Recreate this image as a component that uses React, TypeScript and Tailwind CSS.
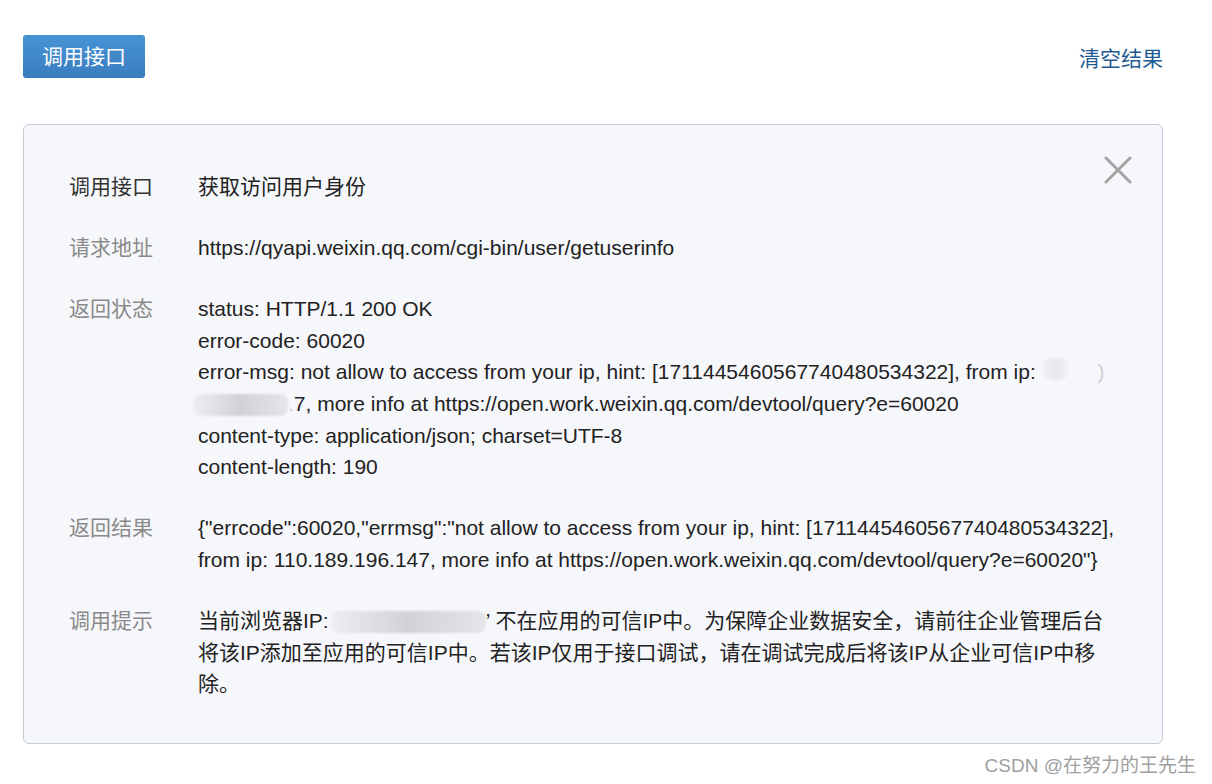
import React from 'react';

const Row = ({ label, dark, children }: { label: string; dark?: boolean; children: React.ReactNode }) => (
  <div className="flex">
    <div className={`w-[129px] shrink-0 ${dark ? 'text-[#333333]' : 'text-[#8a8a8a]'}`}>{label}</div>
    <div className="flex-1 text-[#222222]">{children}</div>
  </div>
);

const Blur = ({ w, className = '' }: { w: number; className?: string }) => (
  <span
    className={`inline-block align-middle h-[22px] rounded-[8px] bg-gradient-to-r from-[#eeeef2] via-[#d2d2d6] to-[#e6e6ea] blur-[1px] ${className}`}
    style={{ width: w }}
  />
);

export default function App() {
  return (
    <div className="min-h-[784px] w-[1212px] bg-white font-['Liberation_Sans','Noto_Sans_CJK_SC',sans-serif] relative">
      <div className="flex items-start justify-between pl-[23px] pr-[49px] pt-[35px]">
        <button className="h-[43px] w-[122px] rounded-[3px] bg-gradient-to-b from-[#4693d6] to-[#3a7ebf] text-[21px] text-white">
          调用接口
        </button>
        <button className="mt-[8px] text-[21px] text-[#1f5b92]">清空结果</button>
      </div>

      <div className="relative mx-[23px] mt-[46px] w-[1140px] rounded-[6px] border border-[#c3cbd6] bg-[#f6f7fb] pl-[45px] pr-[30px] pt-[46px] pb-[43px] text-[21px] leading-[31.6px]">
        <svg className="absolute right-[30px] top-[31px]" width="28" height="28" viewBox="0 0 28 28">
          <path d="M2 2 L26 26 M26 2 L2 26" stroke="#a3a3a3" strokeWidth="3" strokeLinecap="round" />
        </svg>

        <div className="flex flex-col gap-[29.5px]">
          <Row label="调用接口" dark>获取访问用户身份</Row>
          <Row label="请求地址">https://qyapi.weixin.qq.com/cgi-bin/user/getuserinfo</Row>
          <Row label="返回状态">
            <div>status: HTTP/1.1 200 OK</div>
            <div>error-code: 60020</div>
            <div className="whitespace-nowrap">
              error-msg: not allow to access from your ip, hint: [1711445460567740480534322], from ip:{' '}
              <Blur w={26} className="opacity-40 -mt-[10px]" />
              <span className="ml-[30px] text-[#d0d0d0]">)</span>
            </div>
            <div className="whitespace-nowrap -ml-[5px]">
              <Blur w={95} />
              <span className="text-[#c8c8c8]">.</span>7, more info at https://open.work.weixin.qq.com/devtool/query?e=60020
            </div>
            <div>content-type: application/json; charset=UTF-8</div>
            <div>content-length: 190</div>
          </Row>
          <Row label="返回结果">
            <div className="whitespace-nowrap">
              {'{"errcode":60020,"errmsg":"not allow to access from your ip, hint: [1711445460567740480534322],'}
            </div>
            <div className="whitespace-nowrap">
              {'from ip: 110.189.196.147, more info at https://open.work.weixin.qq.com/devtool/query?e=60020"}'}
            </div>
          </Row>
          <Row label="调用提示">
            <div className="whitespace-nowrap">
              当前浏览器IP:<Blur w={155} className="ml-[2px]" />’ 不在应用的可信IP中。为保障企业数据安全，请前往企业管理后台
            </div>
            <div className="whitespace-nowrap">
              将该IP添加至应用的可信IP中。若该IP仅用于接口调试，请在调试完成后将该IP从企业可信IP中移
            </div>
            <div>除。</div>
          </Row>
        </div>
      </div>

      <div className="absolute right-[16px] top-[752px] text-[19px] text-[#a0a0a0]">CSDN @在努力的王先生</div>
    </div>
  );
}
